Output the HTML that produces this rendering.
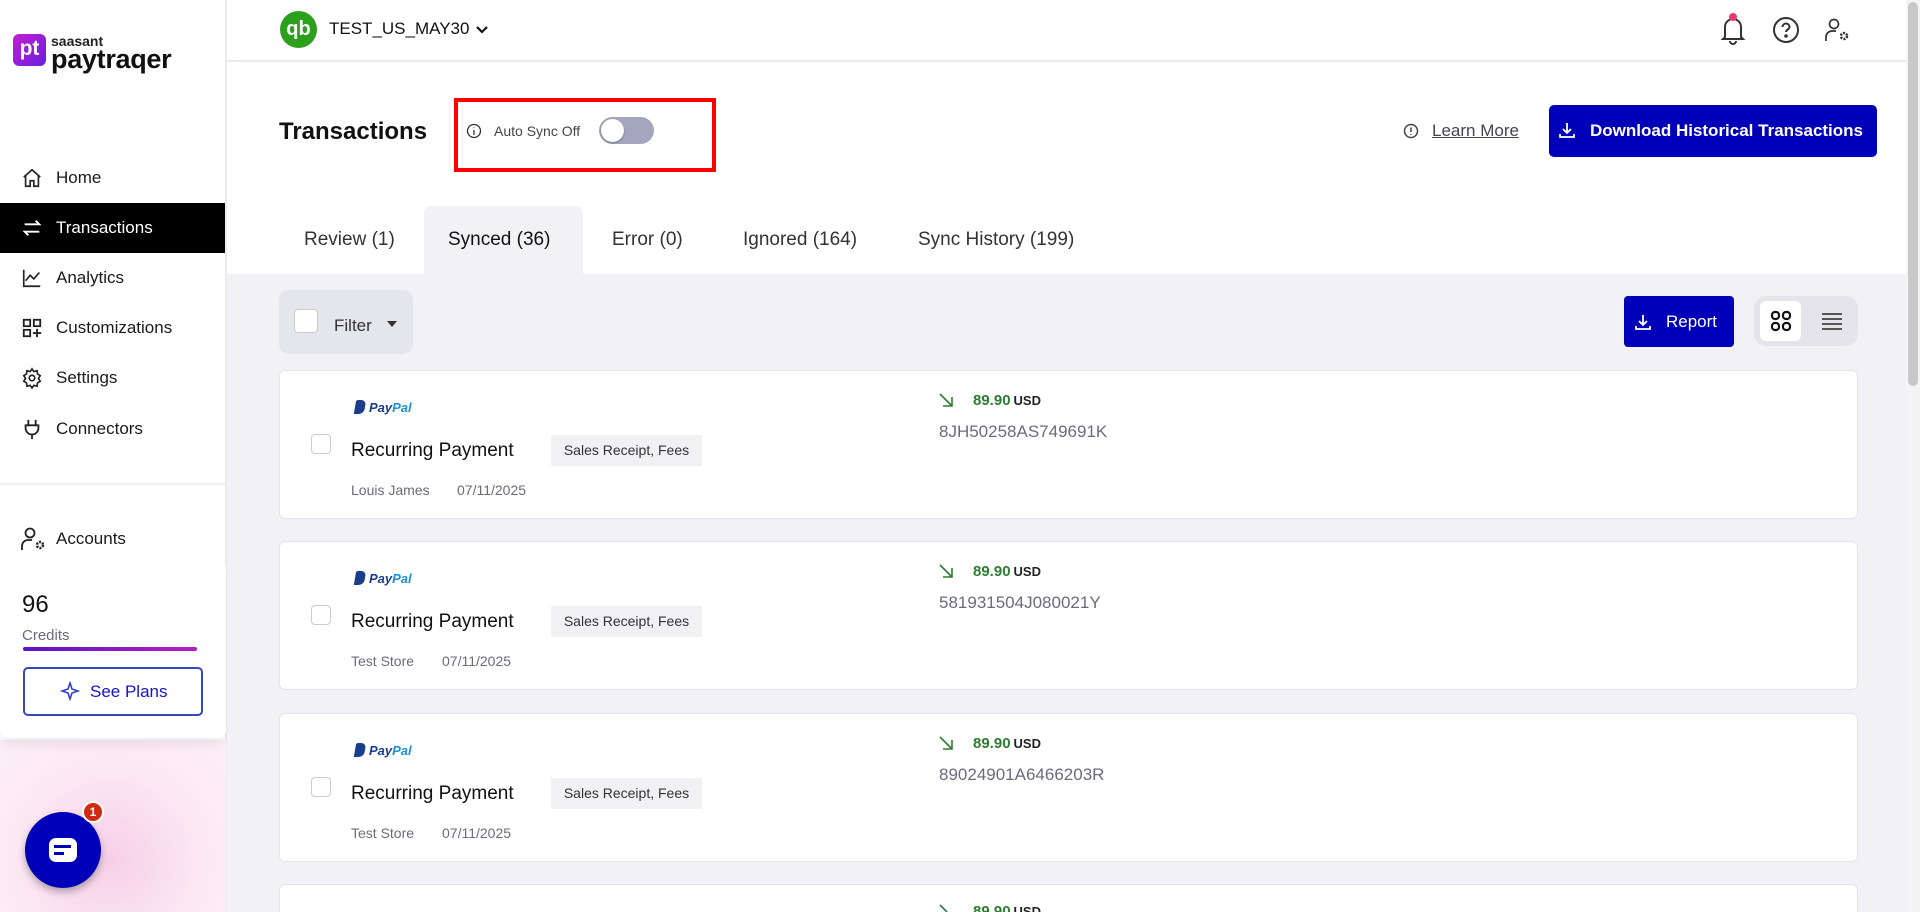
<!DOCTYPE html>
<html style="width:1920px;height:912px;overflow:hidden"><head><meta charset="utf-8"><style>
*{box-sizing:border-box;margin:0;padding:0}
body{width:1920px;height:912px;overflow:hidden;background:#fff;font-family:"Liberation Sans",sans-serif;position:relative;color:#111}
.a{position:absolute}
.side{left:0;top:0;width:227px;height:912px;background:#fff;border-right:2px solid #ececf0}
.pink{left:0;top:740px;width:226px;height:172px;background:radial-gradient(circle at 110px 120px,#f7cfe8 0,#fbe6f2 50%,#fdf0f7 100%)}
.nav{left:0;width:225px;height:50px;display:flex;align-items:center;font-size:17px;color:#1a1a1a}
.nav svg{position:absolute;left:21px}
.nav span{position:absolute;left:56px}
.hdr{left:227px;top:60px;width:1680px;height:2px;background:#e8e8ee}
.gray{left:227px;top:274px;width:1679px;height:638px;background:#f2f2f6}
.card{left:279px;width:1579px;height:149px;background:#fff;border:1.5px solid #e3e3ea;border-radius:6px}
.tab{top:206px;height:68px;font-size:19px;color:#333;line-height:68px}
.pp{position:absolute;left:355px;font-size:13px;font-weight:bold;font-style:italic;color:#1a3e8c}
.pp i{color:#1e90d8}
.pp b{display:inline-block;width:10px;height:14px;background:#1a3e8c;border-radius:2px 5px 5px 0;margin-right:4px;vertical-align:-2px;transform:skewX(-10deg)}
.cb{position:absolute;left:311px;width:20px;height:20px;border:1px solid #ccc;border-radius:4px;background:#fff}
.rp{position:absolute;left:351px;font-size:19px;color:#111;font-weight:500}
.tg{position:absolute;left:551px;width:151px;height:31px;background:#f1f1f4;font-size:14px;color:#333;line-height:31px;text-align:center}
.nm{position:absolute;left:351px;font-size:14px;color:#6b6b7b}
.dt{position:absolute;font-size:14px;color:#6b6b7b}
.am{position:absolute;left:973px;font-size:15px;color:#2e7d32;font-weight:bold}
.am span{color:#222;font-size:13px;font-weight:bold;margin-left:3px}
.ar{position:absolute;left:938px}
.id{position:absolute;left:939px;font-size:17px;color:#6b6b80}
</style></head><body>
<div class="a side"></div>
<div class="a pink"></div>
<!-- logo -->
<div class="a" style="left:13px;top:34px;width:33px;height:32px;border-radius:6px;background:linear-gradient(135deg,#c21fd1,#6a1fe0);color:#fff;font-weight:bold;font-size:21px;line-height:30px;text-align:center">pt</div>
<div class="a" style="left:51px;top:33px;font-size:14px;font-weight:bold;color:#222">saasant</div>
<div class="a" style="left:51px;top:44px;font-size:27px;font-weight:bold;color:#111;letter-spacing:-0.3px">paytraqer</div>
<!-- nav -->
<div class="a nav" style="top:153px"><svg width="22" height="22" viewBox="0 0 24 24" fill="none" stroke="#222" stroke-width="1.8"><path d="M3 11l9-8 9 8M5 9.5V21h5v-6h4v6h5V9.5"/></svg><span>Home</span></div>
<div class="a nav" style="top:203px;background:#000;color:#fff"><svg width="22" height="22" viewBox="0 0 24 24" fill="none" stroke="#fff" stroke-width="2"><path d="M4 8h16l-4-4M20 16H4l4 4"/></svg><span>Transactions</span></div>
<div class="a nav" style="top:253px"><svg width="22" height="22" viewBox="0 0 24 24" fill="none" stroke="#222" stroke-width="1.8"><path d="M3 3v18h18M5 15l5-6 4 4 6-7"/></svg><span>Analytics</span></div>
<div class="a nav" style="top:303px"><svg width="22" height="22" viewBox="0 0 24 24" fill="none" stroke="#222" stroke-width="2"><rect x="3" y="3" width="7" height="7"/><rect x="14" y="3" width="7" height="7"/><rect x="3" y="14" width="7" height="7"/><path d="M17.5 13v9M13 17.5h9"/></svg><span>Customizations</span></div>
<div class="a nav" style="top:353px"><svg width="22" height="22" viewBox="0 0 24 24" fill="none" stroke="#222" stroke-width="1.8"><circle cx="12" cy="12" r="3"/><path d="M12 2l2 3 3.5-1 .5 3.5 3 2-2 3 2 3-3 2-.5 3.5-3.5-1-2 3-2-3-3.5 1-.5-3.5-3-2 2-3-2-3 3-2 .5-3.5 3.5 1z"/></svg><span>Settings</span></div>
<div class="a nav" style="top:404px"><svg width="22" height="22" viewBox="0 0 24 24" fill="none" stroke="#222" stroke-width="2"><path d="M8 2v6M16 2v6M5 8h14v3a7 7 0 01-14 0zM12 18v5"/></svg><span>Connectors</span></div>
<div class="a" style="left:0;top:483px;width:225px;height:2px;background:#eee"></div>
<div class="a nav" style="top:514px"><svg width="26" height="26" viewBox="0 0 26 26" fill="none" stroke="#222" stroke-width="1.8"><circle cx="9" cy="7" r="4.5"/><path d="M1 24v-4a6 6 0 016-6h4"/><circle cx="19" cy="19" r="3" stroke-width="2.5" stroke-dasharray="2 1.2"/></svg><span>Accounts</span></div>
<!-- credits card -->
<div class="a" style="left:0;top:566px;width:226px;height:172px;background:#fff;border-radius:0 0 8px 8px;box-shadow:0 6px 12px rgba(0,0,0,.08)"></div>
<div class="a" style="left:22px;top:591px;font-size:24px;color:#111">96</div>
<div class="a" style="left:22px;top:627px;font-size:15px;color:#6b6b80">Credits</div>
<div class="a" style="left:23px;top:647px;width:174px;height:4px;border-radius:2px;background:linear-gradient(90deg,#5a13c8,#b61fc0)"></div>
<div class="a" style="left:23px;top:667px;width:180px;height:49px;border:2px solid #3848b8;border-radius:5px;color:#1515c8;font-size:17px;line-height:45px;padding-left:65px">See Plans</div>
<svg class="a" style="left:60px;top:681px" width="20" height="20" viewBox="0 0 20 20" fill="none" stroke="#3040d0" stroke-width="1.6"><path d="M10 2l2 6 6 2-6 2-2 6-2-6-6-2 6-2z"/></svg>
<!-- chat -->
<div class="a" style="left:25px;top:812px;width:76px;height:76px;border-radius:50%;background:#0000b8;box-shadow:0 4px 8px rgba(0,0,0,.3)"></div>
<div class="a" style="left:49px;top:838px;width:28px;height:24px;border-radius:7px;background:#fff"></div>
<div class="a" style="left:54px;top:845px;width:17px;height:3px;background:#0000b8"></div>
<div class="a" style="left:54px;top:852px;width:10px;height:3px;background:#0000b8"></div>
<div class="a" style="left:82px;top:801px;width:22px;height:22px;border-radius:50%;background:#d02a10;border:2px solid #fff;color:#fff;font-size:12px;font-weight:bold;text-align:center;line-height:18px">1</div>
<!-- header -->
<div class="a hdr"></div>
<div class="a" style="left:280px;top:11px;width:37px;height:37px;border-radius:50%;background:#2ca01c;color:#fff;font-weight:bold;font-size:20px;text-align:center;line-height:36px">qb</div>
<div class="a" style="left:329px;top:19px;font-size:17px;color:#111">TEST_US_MAY30</div>
<svg class="a" style="left:474px;top:22px" width="16" height="16" viewBox="0 0 16 16" fill="none" stroke="#111" stroke-width="2.2"><path d="M3 5l5 5 5-5"/></svg>
<svg class="a" style="left:1718px;top:10px" width="30" height="36" viewBox="0 0 30 36" fill="none" stroke="#333" stroke-width="2"><path d="M7 27V17a8 8 0 0116 0v10l2 2H5zM12 31a3 3 0 006 0"/><circle cx="15" cy="7" r="4" fill="#e63b6a" stroke="none"/></svg>
<svg class="a" style="left:1772px;top:16px" width="28" height="28" viewBox="0 0 28 28" fill="none" stroke="#333" stroke-width="2"><circle cx="14" cy="14" r="12"/><path d="M10.5 11a3.5 3.5 0 117 0c0 2.5-3.5 2.5-3.5 5"/><circle cx="14" cy="20" r=".8" fill="#333"/></svg>
<svg class="a" style="left:1825px;top:17px" width="26" height="26" viewBox="0 0 26 26" fill="none" stroke="#333" stroke-width="1.7"><circle cx="9" cy="7" r="4.5"/><path d="M1 24v-4a6 6 0 016-6h4"/><circle cx="19" cy="19" r="3" stroke-width="2.5" stroke-dasharray="2 1.2"/></svg>
<!-- scrollbar -->
<div class="a" style="left:1906px;top:0;width:14px;height:912px;background:#f4f4f4"></div>
<div class="a" style="left:1908px;top:2px;width:10px;height:384px;background:#c8c8c8;border-radius:5px"></div>
<!-- title row -->
<div class="a" style="left:279px;top:118px;font-size:24px;font-weight:bold;color:#111">Transactions</div>
<div class="a" style="left:454px;top:98px;width:262px;height:74px;border:4px solid #f00"></div>
<svg class="a" style="left:466px;top:123px" width="16" height="16" viewBox="0 0 16 16" fill="none" stroke="#333" stroke-width="1.3"><circle cx="8" cy="8" r="6.5"/><path d="M8 7v5M8 4.5v.5"/></svg>
<div class="a" style="left:494px;top:123px;font-size:14px;color:#444">Auto Sync Off</div>
<div class="a" style="left:599px;top:117px;width:55px;height:27px;border-radius:14px;background:#a3a6bd"></div>
<div class="a" style="left:601px;top:119px;width:23px;height:23px;border-radius:50%;background:#fff;box-shadow:0 1px 2px rgba(0,0,0,.3)"></div>
<svg class="a" style="left:1403px;top:123px" width="16" height="16" viewBox="0 0 16 16" fill="none" stroke="#444" stroke-width="1.5"><circle cx="8" cy="8" r="6.5"/><path d="M8 4.5v4.5M8 11v.8"/></svg>
<div class="a" style="left:1432px;top:121px;font-size:17px;color:#445;text-decoration:underline">Learn More</div>
<div class="a" style="left:1549px;top:105px;width:328px;height:52px;border-radius:5px;background:#0000b8;color:#fff;font-size:17px;font-weight:bold;line-height:52px;padding-left:41px">Download Historical Transactions</div>
<svg class="a" style="left:1558px;top:121px" width="18" height="18" viewBox="0 0 18 18" fill="none" stroke="#fff" stroke-width="1.8"><path d="M9 2v10M5 8l4 4 4-4M2 13v3h14v-3"/></svg>
<!-- tabs -->
<div class="a" style="left:424px;top:206px;width:159px;height:70px;background:#f2f2f6;border-radius:8px 8px 0 0"></div>
<div class="a tab" style="left:304px">Review (1)</div>
<div class="a tab" style="left:448px;color:#111">Synced (36)</div>
<div class="a tab" style="left:612px">Error (0)</div>
<div class="a tab" style="left:743px">Ignored (164)</div>
<div class="a tab" style="left:918px">Sync History (199)</div>
<div class="a gray"></div>
<!-- filter -->
<div class="a" style="left:279px;top:290px;width:134px;height:64px;border-radius:10px;background:#e5e5ec"></div>
<div class="a" style="left:294px;top:309px;width:24px;height:24px;border-radius:4px;background:#fff;border:1px solid #ccc"></div>
<div class="a" style="left:334px;top:316px;font-size:17px;color:#333">Filter</div>
<svg class="a" style="left:386px;top:320px" width="12" height="8" viewBox="0 0 12 8"><path d="M1 1h10L6 7z" fill="#333"/></svg>
<div class="a" style="left:1624px;top:296px;width:110px;height:51px;border-radius:4px;background:#0000b8;color:#fff;font-size:17px;line-height:51px;padding-left:42px">Report</div>
<svg class="a" style="left:1634px;top:313px" width="18" height="18" viewBox="0 0 18 18" fill="none" stroke="#fff" stroke-width="1.8"><path d="M9 2v10M5 8l4 4 4-4M2 13v3h14v-3"/></svg>
<div class="a" style="left:1754px;top:296px;width:104px;height:50px;border-radius:12px;background:#e4e4ea"></div>
<div class="a" style="left:1760px;top:301px;width:41px;height:40px;border-radius:6px;background:#fff"></div>
<svg class="a" style="left:1770px;top:310px" width="22" height="22" viewBox="0 0 22 22" fill="none" stroke="#111" stroke-width="2.2"><rect x="2" y="2" width="7" height="7" rx="3"/><rect x="13" y="2" width="7" height="7" rx="3"/><rect x="2" y="13" width="7" height="7" rx="3"/><rect x="13" y="13" width="7" height="7" rx="3"/></svg>
<svg class="a" style="left:1821px;top:311px" width="22" height="20" viewBox="0 0 22 20" stroke="#555" stroke-width="2"><path d="M1 3h20M1 8h20M1 13h20M1 18h20"/></svg>

<!-- cards -->
<div class="a card" style="top:370px"></div>
<div class="a card" style="top:541px"></div>
<div class="a card" style="top:713px"></div>
<div class="a card" style="top:884px;height:28px;border-bottom:none;border-radius:6px 6px 0 0"></div>

<div class="pp" style="top:400px"><b></b>Pay<i>Pal</i></div>
<div class="cb" style="top:434px"></div>
<div class="rp" style="top:440px">Recurring Payment</div>
<div class="tg" style="top:435px">Sales Receipt, Fees</div>
<div class="nm" style="top:482px">Louis James</div><div class="dt" style="left:457px;top:482px">07/11/2025</div>
<svg class="ar" style="top:392px" width="16" height="16" viewBox="0 0 16 16" fill="none" stroke="#2e7d32" stroke-width="1.6"><path d="M2 2l12 12M14 5v9H5"/></svg>
<div class="am" style="top:392px">89.90<span>USD</span></div>
<div class="id" style="top:422px">8JH50258AS749691K</div>

<div class="pp" style="top:571px"><b></b>Pay<i>Pal</i></div>
<div class="cb" style="top:605px"></div>
<div class="rp" style="top:611px">Recurring Payment</div>
<div class="tg" style="top:606px">Sales Receipt, Fees</div>
<div class="nm" style="top:653px">Test Store</div><div class="dt" style="left:442px;top:653px">07/11/2025</div>
<svg class="ar" style="top:563px" width="16" height="16" viewBox="0 0 16 16" fill="none" stroke="#2e7d32" stroke-width="1.6"><path d="M2 2l12 12M14 5v9H5"/></svg>
<div class="am" style="top:563px">89.90<span>USD</span></div>
<div class="id" style="top:593px">581931504J080021Y</div>

<div class="pp" style="top:743px"><b></b>Pay<i>Pal</i></div>
<div class="cb" style="top:777px"></div>
<div class="rp" style="top:783px">Recurring Payment</div>
<div class="tg" style="top:778px">Sales Receipt, Fees</div>
<div class="nm" style="top:825px">Test Store</div><div class="dt" style="left:442px;top:825px">07/11/2025</div>
<svg class="ar" style="top:735px" width="16" height="16" viewBox="0 0 16 16" fill="none" stroke="#2e7d32" stroke-width="1.6"><path d="M2 2l12 12M14 5v9H5"/></svg>
<div class="am" style="top:735px">89.90<span>USD</span></div>
<div class="id" style="top:765px">89024901A6466203R</div>

<svg class="ar" style="top:903px" width="16" height="9" viewBox="0 0 16 9" fill="none" stroke="#2e7d32" stroke-width="1.6"><path d="M2 2l7 7"/></svg>
<div class="a" style="left:973px;top:903px;width:80px;height:9px;overflow:hidden"><div class="am" style="left:0;top:0">89.90<span>USD</span></div></div>
</body></html>
